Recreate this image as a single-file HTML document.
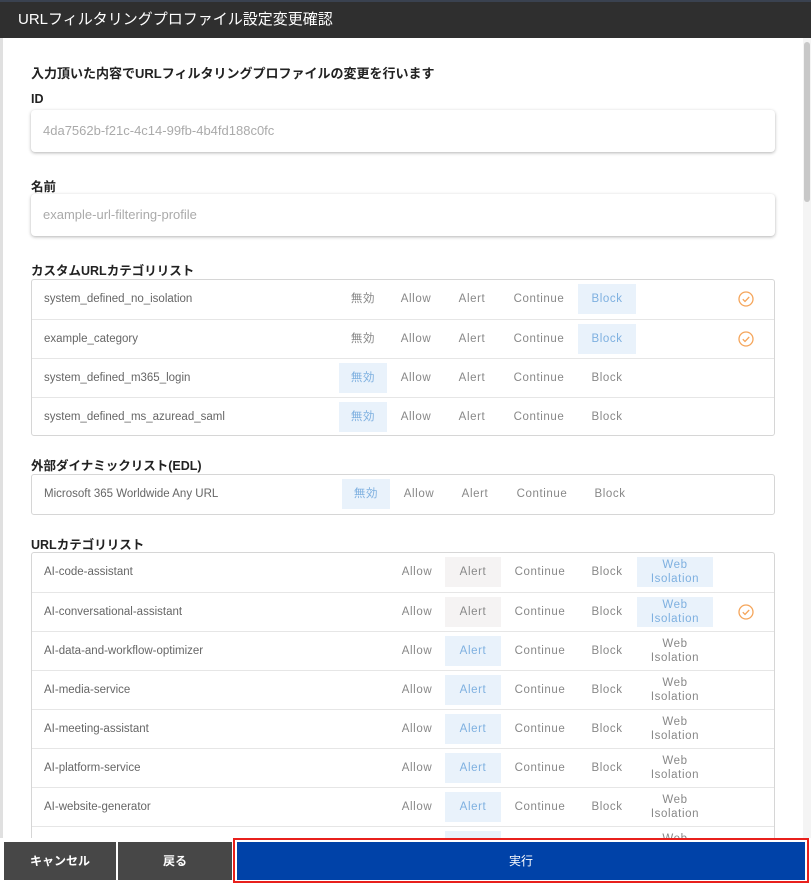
<!DOCTYPE html>
<html><head><meta charset="utf-8">
<style>
*{margin:0;padding:0;box-sizing:border-box}
html,body{width:811px;height:883px;overflow:hidden}
body{background:#fff;font-family:"Liberation Sans","Noto Sans CJK JP",sans-serif;position:relative}
.a{position:absolute}
.hdr{left:0;top:0;width:811px;height:38px;background:#2f2f2f;border-top:2px solid #3a4250;color:#fff;font-size:15px;line-height:36px;padding-left:18px}
.lbl{font-size:12.5px;font-weight:bold;color:#222;left:31px}
.inp{left:31px;width:744px;height:42px;background:#fff;border-radius:4px;box-shadow:0 1px 3px rgba(0,0,0,.3);font-size:13px;color:#aaa;line-height:42px;padding-left:12px}
.tbl{left:31px;width:744px;border:1px solid #d6d6d6;border-radius:3px}
.row{position:absolute;left:0;width:742px;height:39px;border-top:1px solid #e6e6e6}
.row:first-child{border-top:none}
.nm{position:absolute;left:12px;top:0;line-height:38px;font-size:11.5px;color:#666}
.o{position:absolute;top:4px;height:30px;line-height:30px;text-align:center;font-size:11.5px;color:#888;letter-spacing:.6px}
.on{background:#e9f2fb;color:#7eb0e0}
.g{background:#f5f3f3}
.wi{line-height:14px;padding-top:1px}
.ck{position:absolute;left:706px;top:11px;width:16px;height:16px}
.btn{top:842px;height:38px;color:#fff;font-size:12px;font-weight:bold;text-align:center;line-height:38px;background:#474747}
</style></head><body>
<div class="a" style="left:0;top:38px;width:3px;height:845px;background:#e0e0e0"></div>
<div class="a" style="left:803px;top:38px;width:8px;height:845px;background:#f4f4f4"></div>
<div class="a" style="left:804px;top:42px;width:6px;height:160px;background:#c8c8c8;border-radius:3px"></div>
<div class="a hdr">URLフィルタリングプロファイル設定変更確認</div>
<div class="a lbl" style="top:63px;font-size:13px">入力頂いた内容でURLフィルタリングプロファイルの変更を行います</div>
<div class="a lbl" style="top:92px">ID</div>
<div class="a inp" style="top:110px">4da7562b-f21c-4c14-99fb-4b4fd188c0fc</div>
<div class="a lbl" style="top:176px">名前</div>
<div class="a inp" style="top:194px">example-url-filtering-profile</div>

<div class="a lbl" style="top:260px">カスタムURLカテゴリリスト</div>
<div class="a tbl" style="top:279px;height:157px">
 <div class="row" style="top:0"><span class="nm">system_defined_no_isolation</span>
  <span class="o" style="left:307px;width:48px">無効</span><span class="o" style="left:360px;width:48px">Allow</span><span class="o" style="left:416px;width:48px">Alert</span><span class="o" style="left:472px;width:70px">Continue</span><span class="o on" style="left:546px;width:58px">Block</span>
  <svg class="ck" viewBox="0 0 16 16"><circle cx="8" cy="8" r="7" fill="none" stroke="#f5a55a" stroke-width="1.3"/><path d="M4.8 8.2l2.2 2.2 4.2-4.4" fill="none" stroke="#f5a55a" stroke-width="1.3"/></svg></div>
 <div class="row" style="top:39px"><span class="nm">example_category</span>
  <span class="o" style="left:307px;width:48px">無効</span><span class="o" style="left:360px;width:48px">Allow</span><span class="o" style="left:416px;width:48px">Alert</span><span class="o" style="left:472px;width:70px">Continue</span><span class="o on" style="left:546px;width:58px">Block</span>
  <svg class="ck" viewBox="0 0 16 16"><circle cx="8" cy="8" r="7" fill="none" stroke="#f5a55a" stroke-width="1.3"/><path d="M4.8 8.2l2.2 2.2 4.2-4.4" fill="none" stroke="#f5a55a" stroke-width="1.3"/></svg></div>
 <div class="row" style="top:78px"><span class="nm">system_defined_m365_login</span>
  <span class="o on" style="left:307px;width:48px">無効</span><span class="o" style="left:360px;width:48px">Allow</span><span class="o" style="left:416px;width:48px">Alert</span><span class="o" style="left:472px;width:70px">Continue</span><span class="o" style="left:546px;width:58px">Block</span></div>
 <div class="row" style="top:117px"><span class="nm">system_defined_ms_azuread_saml</span>
  <span class="o on" style="left:307px;width:48px">無効</span><span class="o" style="left:360px;width:48px">Allow</span><span class="o" style="left:416px;width:48px">Alert</span><span class="o" style="left:472px;width:70px">Continue</span><span class="o" style="left:546px;width:58px">Block</span></div>
</div>

<div class="a lbl" style="top:455px">外部ダイナミックリスト(EDL)</div>
<div class="a tbl" style="top:474px;height:41px">
 <div class="row" style="top:0"><span class="nm">Microsoft 365 Worldwide Any URL</span>
  <span class="o on" style="left:310px;width:48px">無効</span><span class="o" style="left:363px;width:48px">Allow</span><span class="o" style="left:419px;width:48px">Alert</span><span class="o" style="left:475px;width:70px">Continue</span><span class="o" style="left:549px;width:58px">Block</span></div>
</div>

<div class="a lbl" style="top:534px">URLカテゴリリスト</div>
<div class="a tbl" style="top:552px;height:340px;border-bottom:none">
 <div class="row" style="top:0"><span class="nm">AI-code-assistant</span>
  <span class="o" style="left:361px;width:48px">Allow</span><span class="o g" style="left:413px;width:56px">Alert</span><span class="o" style="left:473px;width:70px">Continue</span><span class="o" style="left:547px;width:56px">Block</span><span class="o on wi" style="left:605px;width:76px">Web<br>Isolation</span></div>
 <div class="row" style="top:39px"><span class="nm">AI-conversational-assistant</span>
  <span class="o" style="left:361px;width:48px">Allow</span><span class="o g" style="left:413px;width:56px">Alert</span><span class="o" style="left:473px;width:70px">Continue</span><span class="o" style="left:547px;width:56px">Block</span><span class="o on wi" style="left:605px;width:76px">Web<br>Isolation</span>
  <svg class="ck" viewBox="0 0 16 16"><circle cx="8" cy="8" r="7" fill="none" stroke="#f5a55a" stroke-width="1.3"/><path d="M4.8 8.2l2.2 2.2 4.2-4.4" fill="none" stroke="#f5a55a" stroke-width="1.3"/></svg></div>
 <div class="row" style="top:78px"><span class="nm">AI-data-and-workflow-optimizer</span>
  <span class="o" style="left:361px;width:48px">Allow</span><span class="o on" style="left:413px;width:56px">Alert</span><span class="o" style="left:473px;width:70px">Continue</span><span class="o" style="left:547px;width:56px">Block</span><span class="o wi" style="left:605px;width:76px">Web<br>Isolation</span></div>
 <div class="row" style="top:117px"><span class="nm">AI-media-service</span>
  <span class="o" style="left:361px;width:48px">Allow</span><span class="o on" style="left:413px;width:56px">Alert</span><span class="o" style="left:473px;width:70px">Continue</span><span class="o" style="left:547px;width:56px">Block</span><span class="o wi" style="left:605px;width:76px">Web<br>Isolation</span></div>
 <div class="row" style="top:156px"><span class="nm">AI-meeting-assistant</span>
  <span class="o" style="left:361px;width:48px">Allow</span><span class="o on" style="left:413px;width:56px">Alert</span><span class="o" style="left:473px;width:70px">Continue</span><span class="o" style="left:547px;width:56px">Block</span><span class="o wi" style="left:605px;width:76px">Web<br>Isolation</span></div>
 <div class="row" style="top:195px"><span class="nm">AI-platform-service</span>
  <span class="o" style="left:361px;width:48px">Allow</span><span class="o on" style="left:413px;width:56px">Alert</span><span class="o" style="left:473px;width:70px">Continue</span><span class="o" style="left:547px;width:56px">Block</span><span class="o wi" style="left:605px;width:76px">Web<br>Isolation</span></div>
 <div class="row" style="top:234px"><span class="nm">AI-website-generator</span>
  <span class="o" style="left:361px;width:48px">Allow</span><span class="o on" style="left:413px;width:56px">Alert</span><span class="o" style="left:473px;width:70px">Continue</span><span class="o" style="left:547px;width:56px">Block</span><span class="o wi" style="left:605px;width:76px">Web<br>Isolation</span></div>
 <div class="row" style="top:273px"><span class="nm">AI-writing-assistant</span>
  <span class="o" style="left:361px;width:48px">Allow</span><span class="o on" style="left:413px;width:56px">Alert</span><span class="o" style="left:473px;width:70px">Continue</span><span class="o" style="left:547px;width:56px">Block</span><span class="o wi" style="left:605px;width:76px">Web<br>Isolation</span></div>
</div>

<div class="a" style="left:0;top:838px;width:811px;height:45px;background:#fff"></div>
<div class="a btn" style="left:4px;width:112px">キャンセル</div>
<div class="a btn" style="left:118px;width:114px">戻る</div>
<div class="a" style="left:233px;top:838px;width:576px;height:45px;border:2px solid #e8201c"></div>
<div class="a btn" style="left:237px;width:568px;top:842px;background:#0042a8;font-weight:normal">実行</div>
</body></html>
